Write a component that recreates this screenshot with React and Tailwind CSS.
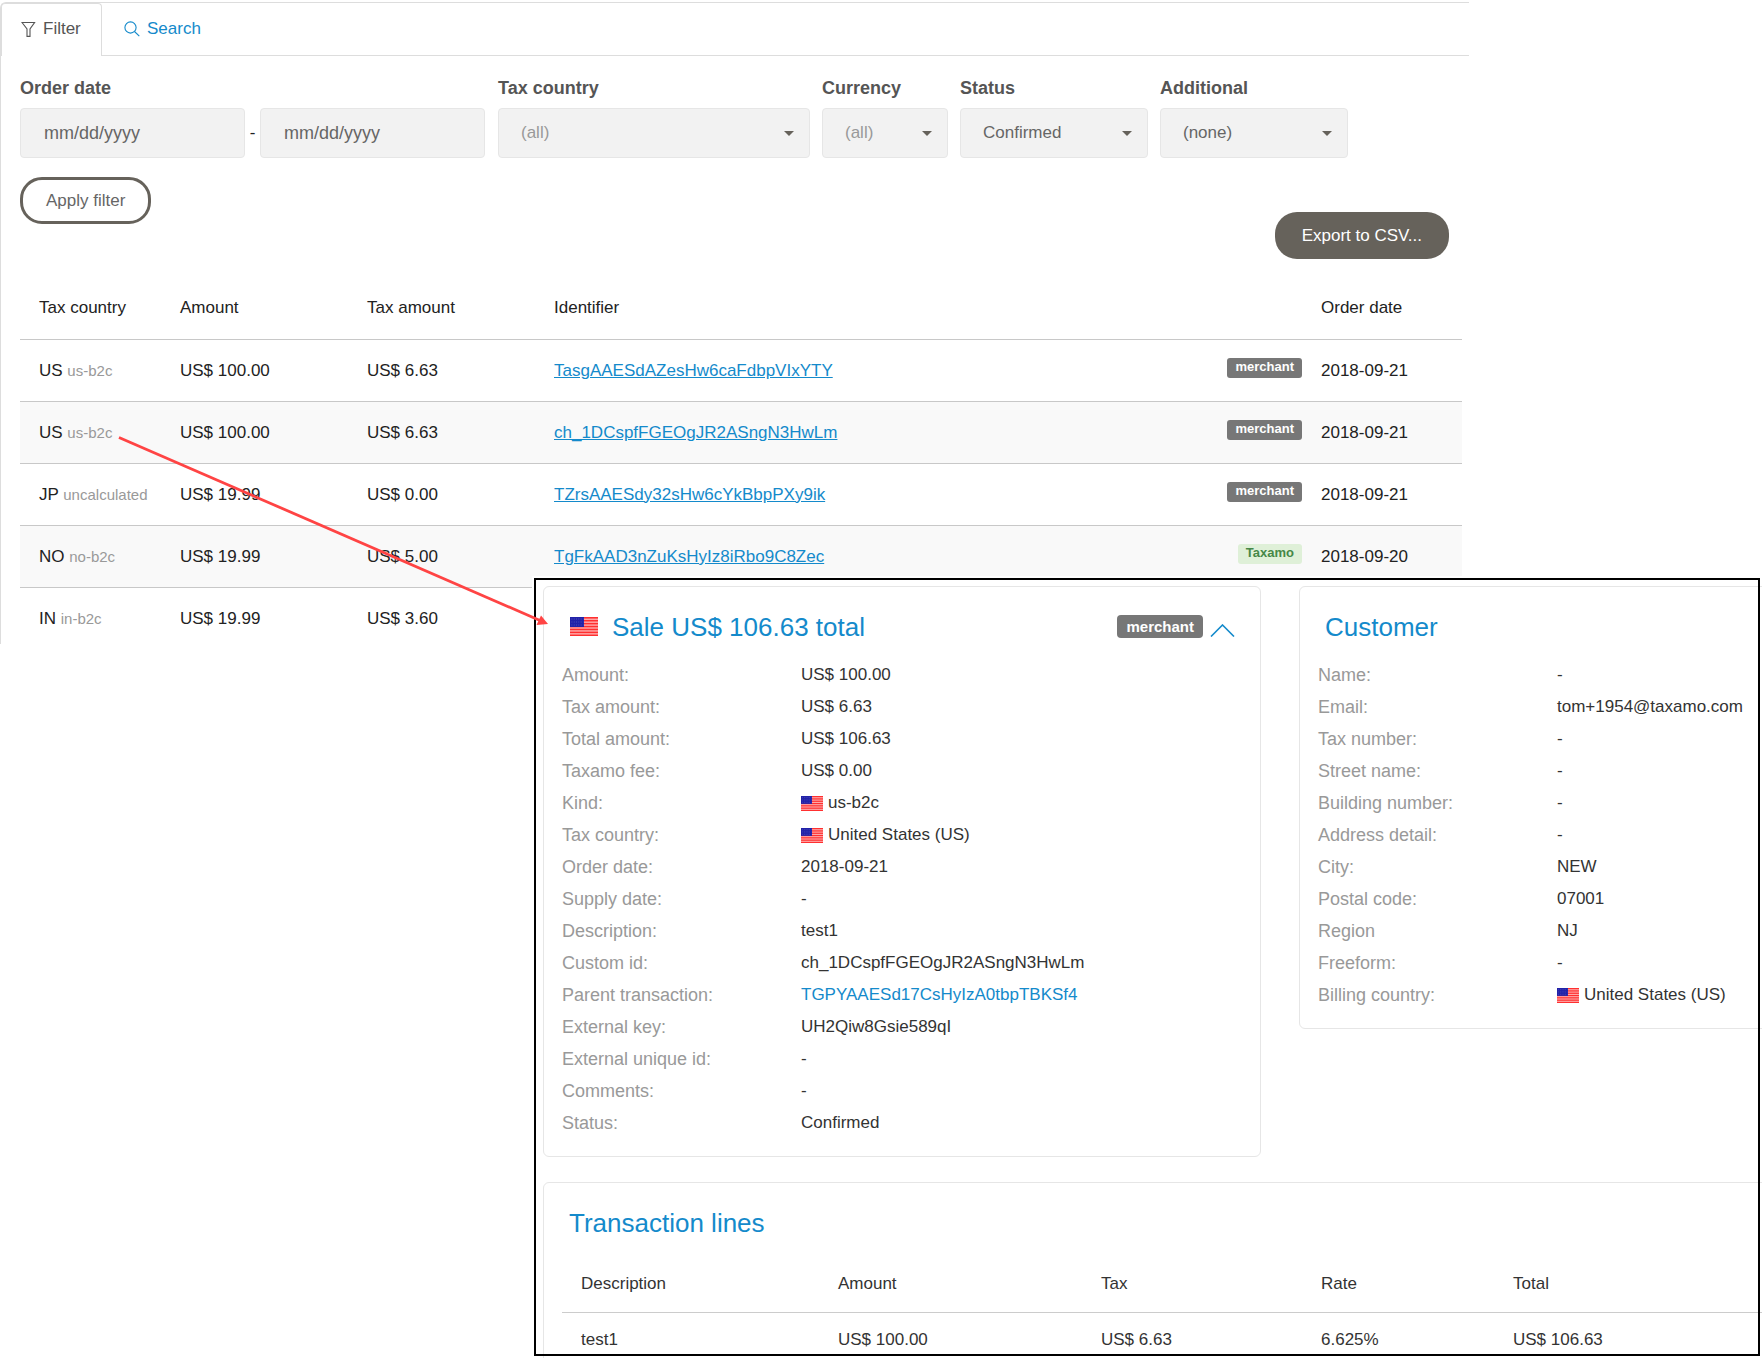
import React from 'react';

const sales = [
  { country: 'US', kind: 'us-b2c', amount: 'US$ 100.00', tax: 'US$ 6.63', id: 'TasgAAESdAZesHw6caFdbpVIxYTY', badge: 'merchant', date: '2018-09-21' },
  { country: 'US', kind: 'us-b2c', amount: 'US$ 100.00', tax: 'US$ 6.63', id: 'ch_1DCspfFGEOgJR2ASngN3HwLm', badge: 'merchant', date: '2018-09-21' },
  { country: 'JP', kind: 'uncalculated', amount: 'US$ 19.99', tax: 'US$ 0.00', id: 'TZrsAAESdy32sHw6cYkBbpPXy9ik', badge: 'merchant', date: '2018-09-21' },
  { country: 'NO', kind: 'no-b2c', amount: 'US$ 19.99', tax: 'US$ 5.00', id: 'TgFkAAD3nZuKsHyIz8iRbo9C8Zec', badge: 'Taxamo', date: '2018-09-20' },
  { country: 'IN', kind: 'in-b2c', amount: 'US$ 19.99', tax: 'US$ 3.60' },
];

const saleDetails = [
  { label: 'Amount:', value: 'US$ 100.00' },
  { label: 'Tax amount:', value: 'US$ 6.63' },
  { label: 'Total amount:', value: 'US$ 106.63' },
  { label: 'Taxamo fee:', value: 'US$ 0.00' },
  { label: 'Kind:', value: 'us-b2c', flag: true },
  { label: 'Tax country:', value: 'United States (US)', flag: true },
  { label: 'Order date:', value: '2018-09-21' },
  { label: 'Supply date:', value: '-' },
  { label: 'Description:', value: 'test1' },
  { label: 'Custom id:', value: 'ch_1DCspfFGEOgJR2ASngN3HwLm' },
  { label: 'Parent transaction:', value: 'TGPYAAESd17CsHyIzA0tbpTBKSf4', link: true },
  { label: 'External key:', value: 'UH2Qiw8Gsie589qI' },
  { label: 'External unique id:', value: '-' },
  { label: 'Comments:', value: '-' },
  { label: 'Status:', value: 'Confirmed' },
];

const customerDetails = [
  { label: 'Name:', value: '-' },
  { label: 'Email:', value: 'tom+1954@taxamo.com' },
  { label: 'Tax number:', value: '-' },
  { label: 'Street name:', value: '-' },
  { label: 'Building number:', value: '-' },
  { label: 'Address detail:', value: '-' },
  { label: 'City:', value: 'NEW' },
  { label: 'Postal code:', value: '07001' },
  { label: 'Region', value: 'NJ' },
  { label: 'Freeform:', value: '-' },
  { label: 'Billing country:', value: 'United States (US)', flag: true },
];

const FilterIcon = () => (
  <svg className="w-[15px] h-4" viewBox="0 0 15 16" fill="none" stroke="currentColor" strokeWidth="1.1">
    <path d="M1 1.5h12.6L9 8v7.4H6V8z" />
  </svg>
);

const SearchIcon = () => (
  <svg className="w-4 h-4" viewBox="0 0 16 16" fill="none" stroke="currentColor" strokeWidth="1.1">
    <circle cx="6.5" cy="6.5" r="5.6" />
    <path d="M10.5 10.5l4.8 4.6" />
  </svg>
);

const UsFlag = ({ className }) => (
  <svg className={className} viewBox="0 0 28 19" preserveAspectRatio="none">
    <rect width="28" height="19" fill="#ffb3b3" />
    {[0, 1, 2, 3, 4, 5, 6].map((i) => (
      <rect key={i} y={i * 2.92} width="28" height="1.6" fill="#ff3030" />
    ))}
    <rect width="14" height="10" fill="#2222a8" />
    {[2, 5, 8].map((y) => (
      <path key={y} d={`M1.5 ${y}h12`} stroke="#6f6fd0" strokeWidth="0.7" strokeDasharray="0.8 1.5" />
    ))}
  </svg>
);

const SelectField = ({ id, label, width, value, muted }) => (
  <div className={width}>
    <label htmlFor={id} className="block text-[18px] leading-6 font-bold text-[#555]">{label}</label>
    <div className="relative mt-2">
      <select
        id={id}
        defaultValue={value}
        className={`appearance-none w-full h-[50px] pl-[22px] pr-8 bg-[#f2f2f2] border border-[#e6e6e6] rounded ${muted ? 'text-[#999]' : 'text-[#666]'}`}
      >
        <option>{value}</option>
      </select>
      <svg className="absolute right-4 top-[23px] w-[10px] h-[5px] pointer-events-none" viewBox="0 0 10 5">
        <path d="M0 0h10L5 5z" fill="#66625b" />
      </svg>
    </div>
  </div>
);

const DetailList = ({ rows }) => (
  <dl className="pl-[18px]">
    {rows.map((row) => (
      <div key={row.label} className="flex h-8 items-center">
        <dt className="w-[239px] shrink-0 text-[18px] text-[#999]">{row.label}</dt>
        <dd className="flex items-center whitespace-nowrap">
          {row.flag && <UsFlag className="w-[22px] h-[15px] mr-[5px]" />}
          {row.link ? <a href="#parent" className="text-[#148acb]">{row.value}</a> : row.value}
        </dd>
      </div>
    ))}
  </dl>
);

const FilterForm = () => (
  <form className="pl-[19px] pt-5 pr-[7px]" onSubmit={(e) => e.preventDefault()}>
    <div className="flex gap-3">
      <div className="w-[466px]">
        <label htmlFor="date-from" className="block text-[18px] leading-6 font-bold text-[#555]">Order date</label>
        <div className="mt-2 flex items-center">
          <input id="date-from" type="text" placeholder="mm/dd/yyyy" className="w-[225px] h-[50px] pl-[23px] text-[18px] bg-[#f2f2f2] border border-[#e6e6e6] rounded placeholder:text-[#666]" />
          <span className="w-[15px] text-center">-</span>
          <input type="text" aria-label="Order date to" placeholder="mm/dd/yyyy" className="w-[225px] h-[50px] pl-[23px] text-[18px] bg-[#f2f2f2] border border-[#e6e6e6] rounded placeholder:text-[#666]" />
        </div>
      </div>
      <SelectField id="tax-country" label="Tax country" width="w-[312px]" value="(all)" muted />
      <SelectField id="currency" label="Currency" width="w-[126px]" value="(all)" muted />
      <SelectField id="status" label="Status" width="w-[188px]" value="Confirmed" />
      <SelectField id="additional" label="Additional" width="w-[188px]" value="(none)" />
    </div>
    <div className="mt-[19px] flex justify-between">
      <button type="submit" className="h-[47px] px-[23px] border-3 border-[#66625b] rounded-[22px] text-[#666]">Apply filter</button>
      <button type="button" className="mt-[35px] mr-[13px] h-[47px] px-[27px] bg-[#66625b] rounded-[22px] text-white">Export to CSV...</button>
    </div>
  </form>
);

const SalesTable = () => (
  <div className="pl-[19px] pr-[7px] mt-[17px]">
    <table className="w-full table-fixed border-collapse text-left">
      <thead>
        <tr className="h-[63px] border-b border-[#c8c8c8]">
          <th className="w-[141px] pl-[19px] font-normal">Tax country</th>
          <th className="w-[187px] pl-[19px] font-normal">Amount</th>
          <th className="w-[187px] pl-[19px] font-normal">Tax amount</th>
          <th className="pl-[19px] font-normal">Identifier</th>
          <th className="w-[110px]"></th>
          <th className="w-[160px] pl-[19px] font-normal">Order date</th>
        </tr>
      </thead>
      <tbody className="align-top leading-[25px]">
        {sales.map((sale, i) => (
          <tr key={i} className="h-[62px] border-b border-[#c8c8c8] even:bg-[#f9f9f9] last:h-[57px] last:border-0">
            <td className="pl-[19px] pt-[18px] whitespace-nowrap">
              {sale.country} <span className="text-[15px] text-[#999]">{sale.kind}</span>
            </td>
            <td className="pl-[19px] pt-[18px]">{sale.amount}</td>
            <td className="pl-[19px] pt-[18px]">{sale.tax}</td>
            <td className="pl-[19px] pt-[18px]">
              {sale.id && <a href={`#${sale.id}`} className="underline text-[#148acb]">{sale.id}</a>}
            </td>
            <td className="pt-[18px] text-right">
              {sale.badge && (
                <span className={`inline-block align-top px-2 pb-[2px] rounded-[3px] text-[13px] leading-[18px] font-bold ${sale.badge === 'Taxamo' ? 'bg-[#dff0d8] text-[#468847]' : 'bg-[#777] text-white'}`}>
                  {sale.badge}
                </span>
              )}
            </td>
            <td className="pl-[19px] pt-[18px]">{sale.date}</td>
          </tr>
        ))}
      </tbody>
    </table>
  </div>
);

const TransactionLines = () => (
  <section className="mt-[25px] -mr-2 border border-[#e6e6e6] rounded-md pl-[18px] pt-[21px] pb-4">
    <h2 className="pl-[7px] text-[26px] leading-[38px] text-[#148acb]">Transaction lines</h2>
    <table className="mt-[14px] w-full table-fixed border-collapse text-left">
      <thead>
        <tr className="h-[56px] border-b border-[#ccc]">
          <th className="w-[257px] pl-[19px] font-normal">Description</th>
          <th className="w-[263px] pl-[19px] font-normal">Amount</th>
          <th className="w-[220px] pl-[19px] font-normal">Tax</th>
          <th className="w-[192px] pl-[19px] font-normal">Rate</th>
          <th className="pl-[19px] font-normal">Total</th>
        </tr>
      </thead>
      <tbody>
        <tr className="h-[54px]">
          <td className="pl-[19px]">test1</td>
          <td className="pl-[19px]">US$ 100.00</td>
          <td className="pl-[19px]">US$ 6.63</td>
          <td className="pl-[19px]">6.625%</td>
          <td className="pl-[19px]">US$ 106.63</td>
        </tr>
      </tbody>
    </table>
  </section>
);

// Opened sale, lies over the list
const SaleDetail = () => (
  <div className="absolute left-[532px] right-0 top-[576px] bottom-0 overflow-hidden bg-white pl-[11px] pt-[10px] text-[#333]">
    <div className="flex items-start">
      <section className="w-[718px] shrink-0 border border-[#e6e6e6] rounded-md pb-[17px]">
        <header className="flex items-center h-[72px] pt-[7px] pl-[26px] pr-[25px]">
          <UsFlag className="w-7 h-[19px]" />
          <h2 className="ml-[14px] text-[26px] leading-[38px] text-[#148acb]">Sale US$ 106.63 total</h2>
          <span className="ml-auto px-[9px] pt-px pb-px rounded bg-[#777] text-[15px] leading-[21px] font-bold text-white">merchant</span>
          <button type="button" aria-label="Collapse" className="ml-[7px] text-[#148acb]">
            <svg className="w-[25px] h-[13px] mt-2" viewBox="0 0 25 13" fill="none" stroke="currentColor" strokeWidth="1.6">
              <path d="M1 12.5L12.5 1 24 12.5" />
            </svg>
          </button>
        </header>
        <DetailList rows={saleDetails} />
      </section>
      <section className="ml-[38px] -mr-2 flex-1 border border-[#e6e6e6] rounded-md pb-[17px]">
        <header className="flex items-center h-[72px] pt-[7px] pl-[25px]">
          <h2 className="text-[26px] leading-[38px] text-[#148acb]">Customer</h2>
        </header>
        <DetailList rows={customerDetails} />
      </section>
    </div>
    <TransactionLines />
    <div className="absolute inset-[2px] border-2 border-black pointer-events-none" />
  </div>
);

const Arrow = () => (
  <svg className="absolute left-0 top-0 w-[560px] h-[640px] pointer-events-none" viewBox="0 0 560 640">
    <path d="M119 437.500L540 620.500" stroke="#ff4444" strokeWidth="2.8" />
    <path d="M548 624l-11.500 1 4.500-9.500z" fill="#ff4444" />
  </svg>
);

const App = () => (
  <div className="relative min-h-screen overflow-hidden bg-white pt-[2px] text-[17px] text-[#222] font-['Liberation_Sans',Arial,sans-serif]">
    <section className="mr-[293px] border-t border-l border-[#ddd] rounded-tl-md">
      <nav className="flex h-[53px]">
        <button type="button" className="flex items-center gap-[7px] w-[101px] pl-[19px] pb-[2px] border-t border-x border-[#ddd] rounded-t text-[#555]">
          <FilterIcon />
          Filter
        </button>
        <div className="flex flex-1 border-b border-[#ddd]">
          <button type="button" className="flex items-center gap-[7px] pl-[22px] text-[#148acb]">
            <SearchIcon />
            Search
          </button>
        </div>
      </nav>
      <FilterForm />
      <SalesTable />
    </section>
    <SaleDetail />
    <Arrow />
  </div>
);

export default App;
